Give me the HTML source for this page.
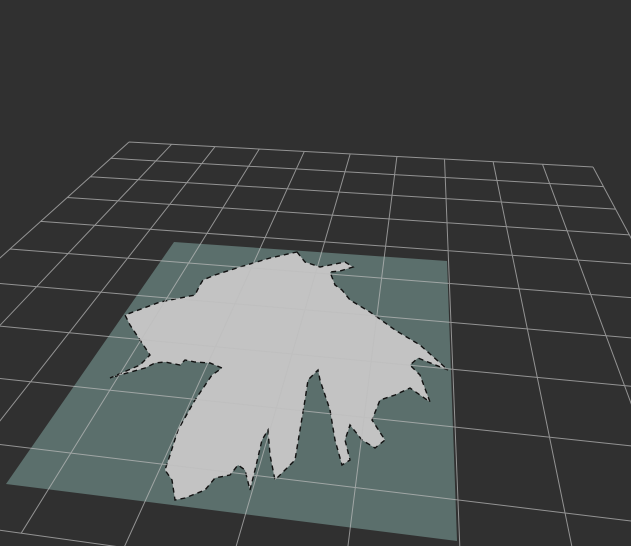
<!DOCTYPE html>
<html><head><meta charset="utf-8"><style>
html,body{margin:0;padding:0;background:#303030;width:631px;height:546px;overflow:hidden}
svg{display:block;position:absolute;left:0;top:0}
</style></head><body>
<svg id="s" width="631" height="546" viewBox="0 0 631 546" xmlns="http://www.w3.org/2000/svg">
<rect width="631" height="546" fill="#303030"/>
<polygon points="174,242 447,261 457,541 6,484" fill="#5b6f6c"/>
<polygon fill="#c3c3c3" stroke="#111" stroke-width="1.4" stroke-dasharray="5 4" points="297,252 305,262 320,267 345,262 353,267 340,271 330,272 335,285 342,290 350,300 370,312 395,330 420,345 448,370 418,358 410,365 420,375 430,402 410,388 395,395 380,400 372,420 385,440 375,448 362,440 350,425 345,440 350,460 342,465 335,440 330,410 320,380 318,370 308,380 305,400 300,430 295,460 285,470 275,480 270,455 268,430 262,440 255,470 250,490 245,470 238,465 230,475 215,478 205,490 185,498 175,500 172,480 165,470 170,455 178,430 195,400 212,375 222,368 210,363 195,362 185,360 180,365 165,362 155,363 145,368 120,375 110,378 140,365 150,355 140,340 130,325 125,315 160,302 195,295 200,285 203,280 215,275 240,267 270,258"/>
<g id="g" stroke="#bdbdbd" stroke-opacity="0.7" stroke-width="1" fill="none"></g>
</svg>
<script>
(function(){
var src=[[0,0],[10,0],[0,5],[7,9]],dst=[[129,142],[593,167],[10,249],[458,500]];
var A=[],b=[];
for(var i=0;i<4;i++){var u=src[i][0],v=src[i][1],x=dst[i][0],y=dst[i][1];
A.push([u,v,1,0,0,0,-u*x,-v*x]);b.push(x);
A.push([0,0,0,u,v,1,-u*y,-v*y]);b.push(y);}
var n=8;for(var c=0;c<n;c++){var p=c;for(var r=c+1;r<n;r++)if(Math.abs(A[r][c])>Math.abs(A[p][c]))p=r;
var t=A[c];A[c]=A[p];A[p]=t;t=b[c];b[c]=b[p];b[p]=t;
for(var r=0;r<n;r++){if(r===c)continue;var f=A[r][c]/A[c][c];for(var k=c;k<n;k++)A[r][k]-=f*A[c][k];b[r]-=f*b[c];}}
var h=[];for(var i=0;i<n;i++)h.push(b[i]/A[i][i]);
function P(u,v){var w=h[6]*u+h[7]*v+1;return [(h[0]*u+h[1]*v+h[2])/w,(h[3]*u+h[4]*v+h[5])/w];}
var g=document.getElementById('g'),d='';
for(var i=0;i<=10;i++){var a=P(i,0),e=P(i,10);d+='M'+a[0].toFixed(1)+' '+a[1].toFixed(1)+'L'+e[0].toFixed(1)+' '+e[1].toFixed(1);
a=P(0,i);e=P(10,i);d+='M'+a[0].toFixed(1)+' '+a[1].toFixed(1)+'L'+e[0].toFixed(1)+' '+e[1].toFixed(1);}
var pa=document.createElementNS('http://www.w3.org/2000/svg','path');pa.setAttribute('d',d);g.appendChild(pa);
})();
</script>
</body></html>
